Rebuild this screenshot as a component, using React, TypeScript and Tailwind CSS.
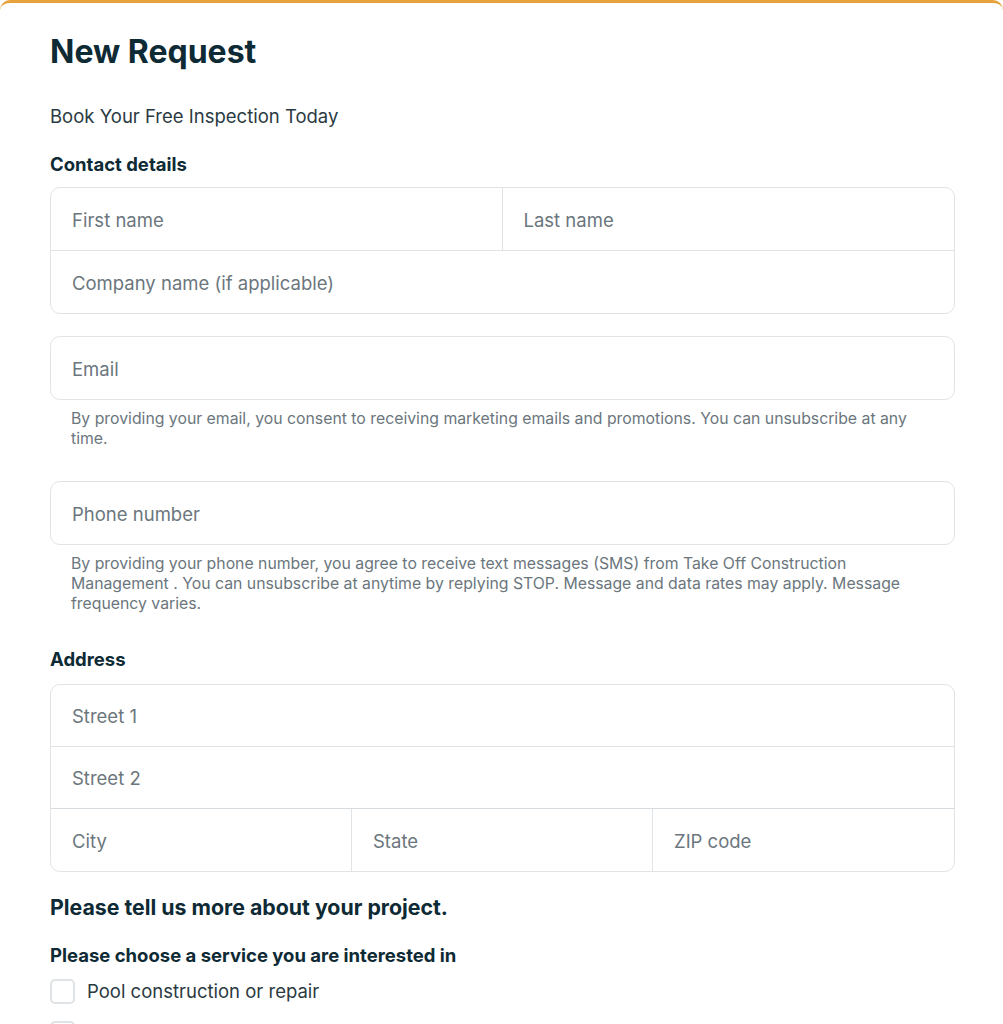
import React from 'react';

const font = { fontFamily: 'Inter, "Noto Sans", sans-serif' };

function Field({ label, className = '' }: { label: string; className?: string }) {
  return (
    <div className={`h-[62px] flex items-center px-[21px] pt-[3px] text-[18.5px] text-[#6b767d] ${className}`}>
      {label}
    </div>
  );
}

export default function App() {
  return (
    <div style={font} className="min-h-screen bg-white">
      <div className="border-t-[3px] border-[#e7a23b] rounded-t-[10px] bg-white pl-[50px] pr-[48px] pt-[29px] pb-[20px] text-[#0e2a35]">
        <h1 className="text-[32px] font-bold leading-[40px]">New Request</h1>
        <p className="mt-[32px] text-[18.5px] text-[#2b3a42] leading-[24px]">Book Your Free Inspection Today</p>

        <h2 className="mt-[24px] text-[18.5px] font-bold leading-[24px]">Contact details</h2>
        <div className="mt-[11px] border border-[#e0e4e7] rounded-[10px]">
          <div className="grid grid-cols-2 border-b border-[#e0e4e7]">
            <Field label="First name" className="border-r border-[#e0e4e7]" />
            <Field label="Last name" />
          </div>
          <Field label="Company name (if applicable)" />
        </div>

        <div className="mt-[22px] border border-[#e0e4e7] rounded-[10px]">
          <Field label="Email" />
        </div>
        <p className="mt-[9px] px-[21px] text-[15.8px] leading-[20px] text-[#6b767d]">
          By providing your email, you consent to receiving marketing emails and promotions. You can unsubscribe at any time.
        </p>

        <div className="mt-[32px] border border-[#e0e4e7] rounded-[10px]">
          <Field label="Phone number" />
        </div>
        <p className="mt-[9px] px-[21px] text-[15.8px] leading-[20px] text-[#6b767d]">
          By providing your phone number, you agree to receive text messages (SMS) from Take Off Construction Management . You can unsubscribe at anytime by replying STOP. Message and data rates may apply. Message frequency varies.
        </p>

        <h2 className="mt-[33px] text-[18.5px] font-bold leading-[24px]">Address</h2>
        <div className="mt-[13px] border border-[#e0e4e7] rounded-[10px]">
          <Field label="Street 1" className="border-b border-[#e0e4e7]" />
          <Field label="Street 2" className="border-b border-[#d6dce0]" />
          <div className="grid grid-cols-3">
            <Field label="City" className="border-r border-[#e0e4e7]" />
            <Field label="State" className="border-r border-[#e0e4e7]" />
            <Field label="ZIP code" />
          </div>
        </div>

        <h2 className="mt-[21px] text-[21.3px] font-bold leading-[28px]">Please tell us more about your project.</h2>
        <h3 className="mt-[22px] text-[18.5px] font-bold leading-[24px]">Please choose a service you are interested in</h3>
        <div className="mt-[11px] flex flex-col gap-[14px]">
          {['Pool construction or repair', 'Deck construction or repair'].map((s) => (
            <label key={s} className="flex items-center gap-[12px] text-[18.5px] text-[#2b3a42]">
              <span className="w-[25px] h-[25px] rounded-[5px] border-2 border-[#dfe3e6] bg-white" />
              {s}
            </label>
          ))}
        </div>
      </div>
    </div>
  );
}
